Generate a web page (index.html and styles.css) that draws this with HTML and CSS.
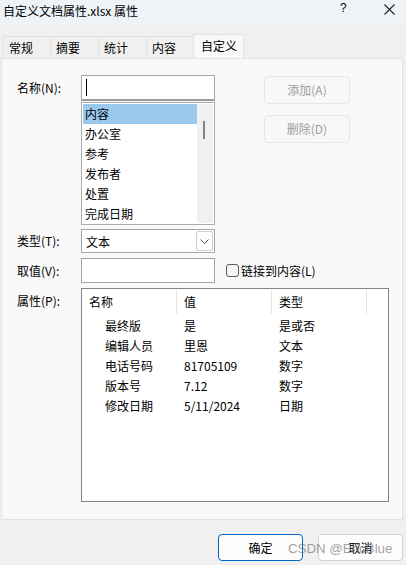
FILE: index.html
```html
<!DOCTYPE html>
<html lang="zh-CN">
<head>
    <meta charset="UTF-8">
    <title>自定义文档属性.xlsx 属性</title>
    <link rel="stylesheet" href="styles.css">
</head>
<body>
    <div class="window">
        <div class="titlebar">
            <span class="title">自定义文档属性.xlsx 属性</span>
            <span class="help">?</span>
            <svg class="close" width="11" height="11" viewBox="0 0 11 11">
                <path d="M0.5 0.5 L10.5 10.5 M10.5 0.5 L0.5 10.5" stroke="#222" stroke-width="1.1" fill="none"/>
            </svg>
        </div>

        <div class="tabs">
            <div class="tab">常规</div>
            <div class="tab">摘要</div>
            <div class="tab">统计</div>
            <div class="tab">内容</div>
            <div class="tab active">自定义</div>
        </div>

        <div class="panel">
            <!-- 名称 -->
            <div class="row">
                <div class="label">名称(N):</div>
                <div class="field">
                    <div class="input name-input"><span class="caret"></span></div>
                    <div class="listbox">
                        <div class="items">
                            <div class="item selected">内容</div>
                            <div class="item">办公室</div>
                            <div class="item">参考</div>
                            <div class="item">发布者</div>
                            <div class="item">处置</div>
                            <div class="item">完成日期</div>
                        </div>
                        <div class="scrollbar"><span class="thumb"></span></div>
                    </div>
                </div>
                <div class="side-buttons">
                    <div class="btn disabled add">添加(A)</div>
                    <div class="btn disabled">删除(D)</div>
                </div>
            </div>

            <!-- 类型 -->
            <div class="row type-row">
                <div class="label">类型(T):</div>
                <div class="combo">
                    <span>文本</span>
                    <span class="drop">
                        <svg width="9" height="5" viewBox="0 0 9 5"><path d="M0.5 0.5 L4.5 4.5 L8.5 0.5" stroke="#555" stroke-width="1" fill="none"/></svg>
                    </span>
                </div>
            </div>

            <!-- 取值 -->
            <div class="row value-row">
                <div class="label">取值(V):</div>
                <div class="input value-input"></div>
                <label class="check"><span class="box"></span>链接到内容(L)</label>
            </div>

            <!-- 属性 -->
            <div class="row props-row">
                <div class="label">属性(P):</div>
                <div class="table">
                    <div class="thead">
                        <div class="th">名称</div>
                        <div class="th">值</div>
                        <div class="th">类型</div>
                        <div class="th last"></div>
                    </div>
                    <div class="tr"><span class="td name">最终版</span><span class="td">是</span><span class="td">是或否</span></div>
                    <div class="tr"><span class="td name">编辑人员</span><span class="td">里恩</span><span class="td">文本</span></div>
                    <div class="tr"><span class="td name">电话号码</span><span class="td">81705109</span><span class="td">数字</span></div>
                    <div class="tr"><span class="td name">版本号</span><span class="td">7.12</span><span class="td">数字</span></div>
                    <div class="tr"><span class="td name">修改日期</span><span class="td">5/11/2024</span><span class="td">日期</span></div>
                </div>
            </div>
        </div>

        <div class="footer">
            <div class="btn ok">确定</div>
            <div class="btn cancel">取消</div>
            <span class="watermark">CSDN @EricBlue</span>
        </div>
    </div>
</body>
</html>
```

FILE: styles.css
```css
body {margin: 0; background: #f0f0f0; font-family: "Noto Sans CJK SC", "Liberation Sans", sans-serif; font-size: 12px; color: #000}
.window {width: 406px; height: 565px; position: relative; overflow: hidden; background: #f0f0f0}

.titlebar {height: 25px; background: #eef3f8; display: flex; align-items: center; padding-left: 3px; position: relative}
.title {line-height: 16px; margin-top: -4px}
.help {position: absolute; left: 340px; top: 1px; font-family: "Liberation Sans", sans-serif; font-size: 12px}
.close {position: absolute; left: 384px; top: 4px}

.tabs {display: flex; align-items: flex-end; padding-left: 3px; margin-top: 9px; height: 24px}
.tab {width: 46px; border: 1px solid #e2e2e2; border-bottom: none; border-right: none; background: #f0f0f0;
      padding-left: 5px; box-sizing: border-box; line-height: 22px; height: 22px}
.tab:nth-child(1) {width: 47px}
.tab:nth-child(2), .tab:nth-child(3) {width: 48px}
.tab:nth-child(4) {width: 47px}
.tab.active {width: 51px; height: 24px; background: #f9f9f9; border-right: 1px solid #e2e2e2; line-height: 22px; padding-left: 7px}

.panel {margin: 0 3px 0 1px; height: 462px; box-sizing: border-box; border: 1px solid #e3e3e3;
        background: #f9f9f9; padding: 16px 0 0 15px}

.row {display: flex; align-items: flex-start}
.label {width: 64px; flex: none; height: 26px; line-height: 26px}
.field {width: 134px; flex: none}
.input {box-sizing: border-box; background: #fff; border: 1px solid #a5a5a5}
.name-input {height: 26px; border-bottom: 2px solid #9a9a9a; position: relative}
.caret {position: absolute; left: 4px; top: 3px; width: 1px; height: 17px; background: #000}

.listbox {height: 123px; margin-top: 1px; box-sizing: border-box; border: 1px solid #acacac; background: #fff; display: flex; padding: 1px}
.items {flex: 1}
.item {height: 20px; line-height: 19px; padding-left: 2px}
.item.selected {background: #99c9ef}
.scrollbar {width: 16px; background: #f0f0f0; position: relative}
.thumb {position: absolute; left: 6px; top: 17px; width: 2px; height: 18px; background: #858585}

.side-buttons {margin-left: 49px; padding-top: 1px}
.btn {box-sizing: border-box; text-align: center; border-radius: 4px}
.btn.disabled {width: 86px; height: 28px; line-height: 26px; border: 1px solid #e6e6e6; background: #f8f8f8; color: #9d9d9d}
.btn.disabled.add {margin-bottom: 11px}

.type-row {margin-top: 4px}
.type-row .label {height: 24px; line-height: 24px}
.combo {width: 134px; height: 24px; box-sizing: border-box; border: 1px solid #a5a5a5; background: #fff;
        display: flex; align-items: center; justify-content: space-between; padding: 0 1px 0 4px}
.drop {width: 17px; height: 20px; box-sizing: border-box; border: 1px solid #cfcfcf; border-radius: 2px; background: #fdfdfd;
       display: flex; align-items: center; justify-content: center}

.value-row {margin-top: 5px}
.value-row .label {height: 25px; line-height: 25px}
.value-input {width: 134px; height: 25px}
.check {display: flex; align-items: center; height: 25px; margin-left: 11px}
.box {width: 13px; height: 13px; box-sizing: border-box; border: 1px solid #5a5a5a; border-radius: 3px; background: #f6f6f6; margin-right: 2px}

.props-row {margin-top: 5px}
.props-row .label {height: 25px; line-height: 25px}
.table {width: 308px; height: 214px; box-sizing: border-box; border: 1px solid #7f848e; background: #fff}
.thead {display: grid; grid-template-columns: 95px 95px 95px 1fr; height: 25px}
.th {line-height: 24px; padding-left: 7px; border-right: 1px solid #e5e5e5; margin-top: 1px}
.th.last {border-right: none}
.tr {display: grid; grid-template-columns: 95px 95px 95px; height: 20px; line-height: 20px}
.td {padding-left: 7px}
.td.name {padding-left: 23px}
.thead + .tr {margin-top: 2px}

.footer {display: flex; justify-content: flex-end; gap: 15px; padding: 14px 3px 0 0; position: relative}
.btn.ok, .btn.cancel {width: 85px; height: 27px; line-height: 25px; background: #fdfdfd}
.btn.ok {border: 1px solid #0067c0}
.btn.cancel {border: 1px solid #d2d2d2}
.watermark {position: absolute; left: 288px; top: 21px; font-family: "Liberation Sans", sans-serif; font-size: 13.3px; color: rgba(120,120,120,0.7)}
```
